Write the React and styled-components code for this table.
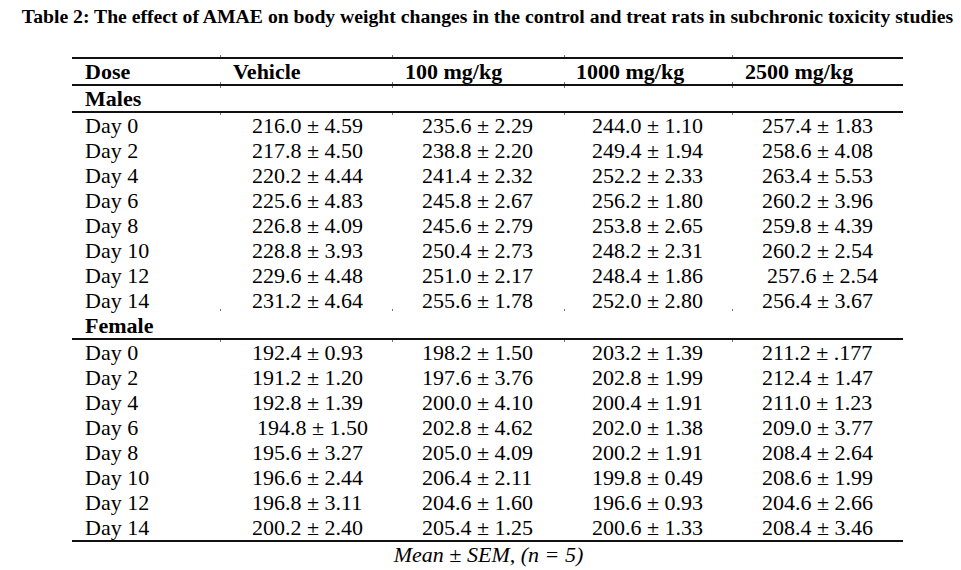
import React from "react";
import styled, { createGlobalStyle } from "styled-components";

const columns = [
  { label: "Dose", width: 149, head: 13, pad: 0 },
  { label: "Vehicle", width: 172, head: 12, pad: 31 },
  { label: "100 mg/kg", width: 172, head: 12, pad: 29 },
  { label: "1000 mg/kg", width: 168, head: 11, pad: 27 },
  { label: "2500 mg/kg", width: 170, head: 12, pad: 29 },
];

const groups = [
  {
    name: "Males",
    rows: [
      ["Day 0", "216.0 ± 4.59", "235.6 ± 2.29", "244.0 ± 1.10", "257.4 ± 1.83"],
      ["Day 2", "217.8 ± 4.50", "238.8 ± 2.20", "249.4 ± 1.94", "258.6 ± 4.08"],
      ["Day 4", "220.2 ± 4.44", "241.4 ± 2.32", "252.2 ± 2.33", "263.4 ± 5.53"],
      ["Day 6", "225.6 ± 4.83", "245.8 ± 2.67", "256.2 ± 1.80", "260.2 ± 3.96"],
      ["Day 8", "226.8 ± 4.09", "245.6 ± 2.79", "253.8 ± 2.65", "259.8 ± 4.39"],
      ["Day 10", "228.8 ± 3.93", "250.4 ± 2.73", "248.2 ± 2.31", "260.2 ± 2.54"],
      ["Day 12", "229.6 ± 4.48", "251.0 ± 2.17", "248.4 ± 1.86", "257.6 ± 2.54"],
      ["Day 14", "231.2 ± 4.64", "255.6 ± 1.78", "252.0 ± 2.80", "256.4 ± 3.67"],
    ],
  },
  {
    name: "Female",
    rows: [
      ["Day 0", "192.4 ± 0.93", "198.2 ± 1.50", "203.2 ± 1.39", "211.2 ± .177"],
      ["Day 2", "191.2 ± 1.20", "197.6 ± 3.76", "202.8 ± 1.99", "212.4 ± 1.47"],
      ["Day 4", "192.8 ± 1.39", "200.0 ± 4.10", "200.4 ± 1.91", "211.0 ± 1.23"],
      ["Day 6", "194.8 ± 1.50", "202.8 ± 4.62", "202.0 ± 1.38", "209.0 ± 3.77"],
      ["Day 8", "195.6 ± 3.27", "205.0 ± 4.09", "200.2 ± 1.91", "208.4 ± 2.64"],
      ["Day 10", "196.6 ± 2.44", "206.4 ± 2.11", "199.8 ± 0.49", "208.6 ± 1.99"],
      ["Day 12", "196.8 ± 3.11", "204.6 ± 1.60", "196.6 ± 0.93", "204.6 ± 2.66"],
      ["Day 14", "200.2 ± 2.40", "205.4 ± 1.25", "200.6 ± 1.33", "208.4 ± 3.46"],
    ],
  },
];

// a few values sit a little right of the others in the source table
const nudges = { "194.8 ± 1.50": 5, "257.6 ± 2.54": 5 };

const GlobalStyle = createGlobalStyle`
  html, body {
    margin: 0;
    background: #ffffff;
  }
  body {
    font-family: "Liberation Serif", "Times New Roman", serif;
    color: #000000;
  }
`;

const Page = styled.div`
  width: 961px;
  padding: 4px 0 0 14px;
  box-sizing: border-box;
  text-align: center;
`;

const Title = styled.h1`
  margin: 0;
  font-size: 19.7px;
  line-height: 25px;
  font-weight: bold;
  white-space: nowrap;
`;

const Table = styled.table`
  margin: 28px auto 0;
  border-collapse: collapse;
  table-layout: fixed;
  width: 831px;
  font-size: 22px;
  line-height: 25px;
  text-align: left;
  border-top: 2px solid #111;
  border-bottom: 2px solid #111;
`;

const Row = styled.tr`
  border-bottom: ${(p) => (p.$ruled ? "2px solid #111" : "none")};
`;

const Cell = styled.td`
  position: relative;
  padding: 0 0 0 ${(p) => p.$pad}px;
  height: 25px;
  white-space: nowrap;
  font-weight: ${(p) => (p.$bold ? "bold" : "normal")};

  &::before,
  &::after {
    content: "";
    display: ${(p) => (p.$ticks ? "block" : "none")};
    position: absolute;
    left: -1px;
    width: 1px;
    height: 2px;
    background: #777;
  }
  &::before {
    top: -4px;
  }
  &::after {
    bottom: -4px;
  }
`;

const Caption = styled.div`
  font-size: 22px;
  line-height: 25px;
  font-style: italic;
  padding-left: 2px;
`;

export default function App() {
  return (
    <Page>
      <GlobalStyle />
      <Title>
        Table 2: The effect of AMAE on body weight changes in the control and
        treat rats in subchronic toxicity studies
      </Title>
      <Table>
        <colgroup>
          {columns.map((c) => (
            <col key={c.label} style={{ width: c.width }} />
          ))}
        </colgroup>
        <thead>
          <Row $ruled>
            {columns.map((c, i) => (
              <Cell as="th" key={c.label} $pad={c.head} $bold $ticks={i > 0}>
                {c.label}
              </Cell>
            ))}
          </Row>
        </thead>
        {groups.map((g) => (
          <tbody key={g.name}>
            <Row $ruled>
              {columns.map((c, i) => (
                <Cell key={c.label} $pad={c.head} $bold $ticks={i > 0}>
                  {i === 0 ? g.name : ""}
                </Cell>
              ))}
            </Row>
            {g.rows.map((r) => (
              <Row key={r[0]}>
                {r.map((v, i) => (
                  <Cell
                    key={i}
                    $pad={i === 0 ? columns[0].head : columns[i].pad + (nudges[v] || 0)}
                  >
                    {v}
                  </Cell>
                ))}
              </Row>
            ))}
          </tbody>
        ))}
      </Table>
      <Caption>Mean ± SEM, (n = 5)</Caption>
    </Page>
  );
}
